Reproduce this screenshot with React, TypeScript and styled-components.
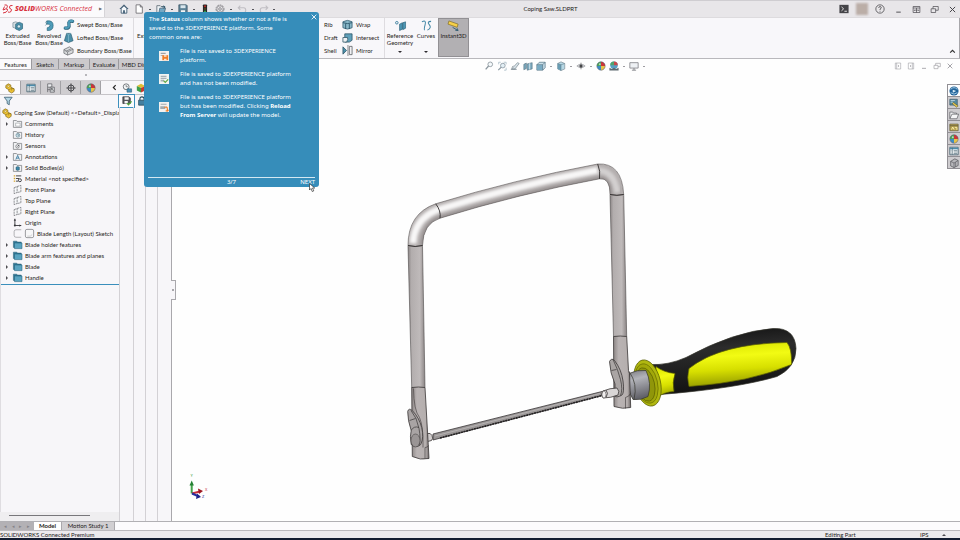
import React from "react";
import styled, { createGlobalStyle, css } from "styled-components";

const GlobalStyle = createGlobalStyle`
  * { box-sizing: border-box; }
  html, body, #root { height: 100%; margin: 0; }
  body {
    font-family: Lato, "Noto Sans", sans-serif;
    font-size: 6px;
    line-height: 8px;
    color: #1f1d21;
    background: #ffffff;
    overflow: hidden;
  }
  button, input { font: inherit; color: inherit; margin: 0; padding: 0; border: 0; background: none; }
  ul { margin: 0; padding: 0; list-style: none; }
  p, h1, h2 { margin: 0; font-size: inherit; font-weight: inherit; }
`;

/* ---------- icons ---------- */

const Svg = styled.svg<{ $size?: number }>`
  display: block;
  flex: none;
  width: ${(p) => p.$size ?? 10}px;
  height: ${(p) => p.$size ?? 10}px;
  overflow: visible;
`;

const glyphs: Record<string, React.ReactNode> = {
  home: <><path d="M1 6 6 1l5 5" fill="none" stroke="#35536b" strokeWidth="1.200" /><path d="M2.600 5.400V11h6.800V5.400L6 2.200z" fill="#f4f8fb" stroke="#35536b" /><path d="M5 7.500h2V11H5z" fill="#35536b" /></>,
  file: <path d="M2.500 1h5l2.500 2.600V11H2.500zM7.500 1v2.600H10" fill="#fff" stroke="#5c5b60" strokeWidth=".9" />,
  open: <><path d="M1 11V2h4l1 1h4v8z" fill="#eef3f6" stroke="#54606a" strokeWidth=".9" /><path d="M3.500 10.500 4.500 5h7l-1.500 5.500z" fill="#74a8c4" stroke="#3d586a" strokeWidth=".8" /><path d="M7 3.500h3M9 2l2 1.600L9 5" fill="none" stroke="#2e5871" /></>,
  save: <><path d="M1 1h9l1 1v9H1z" fill="#5c8297" stroke="#3b5565" strokeWidth=".9" /><path d="M3 1.500h6V5H3z" fill="#d9e6ed" /><path d="M3.500 7.500h5V11h-5z" fill="#f4f4f4" /></>,
  traffic: <><rect x="3.500" y=".5" width="5" height="11" rx="1" fill="#262626" /><circle cx="6" cy="2.800" r="1.300" fill="#b32b24" /><circle cx="6" cy="6" r="1.200" fill="#514a25" /><circle cx="6" cy="9.200" r="1.300" fill="#2fa04a" /></>,
  gear: <><circle cx="6" cy="6" r="4.800" fill="none" stroke="#8a898e" strokeWidth="1.200" strokeDasharray="2.200 .9" /><circle cx="6" cy="6" r="3.800" fill="none" stroke="#77767b" strokeWidth=".7" /><circle cx="6" cy="6" r="1.600" fill="none" stroke="#77767b" strokeWidth=".9" /></>,
  undo: <path d="M4 2 1.500 4.500 4 7M1.500 4.500H8q2.500 0 2.500 3T8 10.500" fill="none" stroke="#c0bec3" strokeWidth="1.300" />,
  redo: <path d="M8 2l2.500 2.500L8 7M10.500 4.500H4q-2.500 0-2.500 3T4 10.500" fill="none" stroke="#c0bec3" strokeWidth="1.300" />,
  console: <><rect x=".5" y="1" width="11" height="10" fill="#454448" /><path d="m3 3.500 2.500 2.300L3 8.200M6.500 8.700H9.500" fill="none" stroke="#fff" strokeWidth="1" /></>,
  help: <><circle cx="6" cy="6" r="5" fill="none" stroke="#3f3e42" strokeWidth=".9" /><path d="M4.400 4.700Q4.500 3.100 6 3.100T7.600 4.500Q7.600 5.300 6 6.200V7.200M6 8.200v1" fill="none" stroke="#3f3e42" strokeWidth=".9" /></>,
  min: <path d="M3 9.500h6" stroke="currentColor" strokeWidth="1.200" />,
  span: <><path d="M1.500 2h9v8h-9zM1.500 4h9M6 4v6" fill="none" stroke="currentColor" strokeWidth=".9" /><path d="M3 7h6M4 6 3 7l1 1M8 6l1 1-1 1" fill="none" stroke="currentColor" strokeWidth=".7" /></>,
  restore: <path d="M1.500 5h6v5h-6zM4 5V2h7v5H7.500" fill="none" stroke="currentColor" strokeWidth=".9" />,
  close: <path d="m2.500 2.500 7 7m0-7-7 7" stroke="currentColor" strokeWidth="1.300" />,
  paneLeft: <><path d="M2 1.500h8v9H2zM4 1.500v9" fill="none" stroke="currentColor" strokeWidth=".8" /><path d="M7.500 4.500 5.500 6l2 1.500z" fill="currentColor" /></>,
  paneRight: <><path d="M2 1.500h8v9H2zM8 1.500v9" fill="none" stroke="currentColor" strokeWidth=".8" /><path d="M4.500 4.500 6.500 6l-2 1.500z" fill="currentColor" /></>,
  extrude: <><path d="M1 3 4 2l3 1v5L4 9 1 8z" fill="#d3dde1" stroke="#6c8490" strokeWidth=".7" /><path d="M4 4.500 8 2.500 11.500 4v5.500L8 11.500 4 9.800z" fill="#4b93ad" stroke="#245a71" strokeWidth=".7" /><circle cx="7.500" cy="7" r="1.800" fill="#d8eaf0" stroke="#245a71" strokeWidth=".6" /></>,
  revolve: <><path d="M3 1q7-1 7 5T3.500 11.500V8.500Q6.500 8 6.500 6T3 4.500z" fill="#4e9cb9" stroke="#256177" strokeWidth=".7" /><path d="M3 1q-2 1.500 0 3.500L1.500 6" fill="#cae1e9" stroke="#256177" strokeWidth=".6" /></>,
  sweep: <><path d="M2.500 10q5 .500 4-4t4-3.500" fill="none" stroke="#275f77" strokeWidth="3.600" strokeLinecap="round" /><path d="M2.500 9.700q5 .500 4-4t4-3.500" fill="none" stroke="#4e9cb9" strokeWidth="2.400" strokeLinecap="round" /></>,
  loft: <><path d="M4 1.500h4.500l2.500 8L6 11.500 1.500 9.500z" fill="#4b8fa9" stroke="#235469" strokeWidth=".7" /><path d="M6 3v8M4 1.500 6 3l2.500-1.500" fill="none" stroke="#8fc0d2" strokeWidth=".7" /></>,
  boundary: <><path d="M1 5 7 2l4 2.500v4L5 11 1 9z" fill="#d8dadc" stroke="#65686c" strokeWidth=".8" /><path d="m3 7 6-3M5 11V7.500L1 5M5 7.500 11 4.500" fill="none" stroke="#65686c" strokeWidth=".7" /></>,
  wrap: <><path d="M1 3q5-3 10 0v6.500q-5 3-10 0z" fill="#89b8c9" stroke="#3c6377" strokeWidth=".9" /><path d="M1 4q5 2 10 0M4 5v6M8 5v6" fill="none" stroke="#234f64" strokeWidth=".9" /></>,
  intersect: <><path d="M3 2h8v7l-3 2H3z" fill="#5fa0ba" stroke="#264e60" strokeWidth=".8" /><path d="M1 6h5q1 2-1 5H1z" fill="#eef1f3" stroke="#264e60" strokeWidth=".8" /></>,
  mirror: <><path d="m1 2 4 4-4 4z" fill="#4c90aa" stroke="#264e60" strokeWidth=".8" /><path d="M6.500 0v12" stroke="#555" strokeWidth=".7" /><path d="M8 1.500h3v9H8z" fill="#f1f1f4" stroke="#50555a" strokeWidth=".8" /></>,
  rib: <path d="M3 2h5v9H3z" fill="#4c90aa" stroke="#264e60" strokeWidth=".8" />,
  reference: <><circle cx="2" cy="3" r="1.400" fill="none" stroke="#397d9b" /><path d="M5 4.500 8 3v7L5 11.500zM8.500 3l3-1v7l-3 1.500z" fill="#4d97b5" stroke="#275f77" strokeWidth=".7" /></>,
  curves: <path d="M1 2q5-2.500 3.500 3T4 11M11 1.500Q6 1.500 9 5t-2 6" fill="none" stroke="#3e84a3" strokeWidth="1.100" />,
  instant: <><path d="m1 1 10 3.500-1 3.500L0 4.500z" fill="#f6d048" stroke="#7b6720" strokeWidth=".7" /><path d="m5 8 6 3.500M11 11.500l-3-.2M11 11.500l-1-2.500" fill="none" stroke="#315d73" /></>,
  zoom: <><circle cx="7.500" cy="4" r="2.800" fill="#f5f9fb" stroke="#8b969e" /><path d="M5.500 6 2 10" stroke="#8b969e" strokeWidth="1.500" /></>,
  zoomArea: <><path d="M2 4V1.500h2.500M8 1.500h3V4M11 8v3H8.500" fill="none" stroke="#9cb0bc" strokeWidth=".8" /><circle cx="7" cy="5.500" r="2.800" fill="#e2eef4" stroke="#8d9aa3" /><path d="M5 7.500 1.500 11" stroke="#8d9aa3" strokeWidth="1.300" /></>,
  prev: <><path d="M2 9.500 9 2l2 1-5 6.500z" fill="#dbe6eb" stroke="#718089" strokeWidth=".8" /><path d="M1 10h7M4 6 2 8" stroke="#718089" /></>,
  section: <><path d="M1 4 4 2.500V9L1 10.500zM5 3.500 11 2v7.500L5 11z" fill="#7ba9be" stroke="#536e7d" strokeWidth=".7" /><path d="M8 2.700v7.600" stroke="#dcebf2" /></>,
  orient: <><path d="M1 4.500h7V11H1z" fill="#8db9ce" stroke="#4d6c7d" strokeWidth=".8" /><path d="m1 4.500 3-3h7V8l-3 3V4.500zM8 4.500l3-3" fill="#c9dfe9" stroke="#4d6c7d" strokeWidth=".8" /><path d="M1.500 5h6v5.500h-6z" fill="#79abc3" /></>,
  cube: <><path d="M2 3 6 1l4.500 2v6.500L6 11.500 2 9.500z" fill="#b7d8e5" stroke="#7b8b94" strokeWidth=".8" /><path d="M2 3 6 4.500v7L2 9.500z" fill="#679db4" /><path d="M6 4.500v7M2 3l4 1.500L10.500 3" fill="none" stroke="#62808e" strokeWidth=".7" /></>,
  eye: <><path d="M1 6q5-4.500 10 0-5 4-10 0z" fill="#d2d3d6" stroke="#8a8b90" strokeWidth=".7" /><circle cx="6" cy="6" r="1.900" fill="#3e4044" /><path d="M6 2v8" stroke="#555" strokeWidth=".7" /></>,
  ball: <><circle cx="6" cy="6" r="5" fill="#3d8cc4" /><path d="M6 6V1a5 5 0 0 1 5 5z" fill="#cc3439" /><path d="M6 6V1a5 5 0 0 0-5 5z" fill="#48a557" /><path d="M6 6h5a5 5 0 0 1-5 5z" fill="#e7c447" /><circle cx="6" cy="6" r="5" fill="none" stroke="#70636a" strokeWidth=".6" /><circle cx="4.600" cy="4" r="1.200" fill="#fff" opacity=".6" /></>,
  scene: <><circle cx="6" cy="5" r="4.500" fill="#58a0c5" /><path d="M6 5V.500a4.500 4.500 0 0 1 4.500 4.500z" fill="#c7484a" /><path d="M6 5V.500A4.500 4.500 0 0 0 1.500 5z" fill="#50a36d" /><path d="M.500 11.500V8l3 1.500L6 8l2.500 1.500 3-1.500v3.500z" fill="#5d696f" /></>,
  monitor: <><path d="M1 2h10v6.500H1z" fill="#eef1f4" stroke="#76777d" strokeWidth=".9" /><path d="M6 8.500V11M3.500 11h5" stroke="#76777d" /></>,
  part: <><path d="M1 6V3l3-2 3 1.500v2.500l4 2v3L8 12 4.500 10V8z" fill="#efc435" stroke="#7f6315" strokeWidth=".8" /><circle cx="4" cy="4" r="1.200" fill="#fff3bf" stroke="#7f6315" strokeWidth=".5" /><path d="M4.500 8 8 6.500 11 7M8 6.500V9" fill="none" stroke="#7f6315" strokeWidth=".6" /></>,
  list: <><path d="M1 1.500h10v9H1z" fill="#fff" stroke="#45616f" /><path d="M1 2h10v2H1z" fill="#4b8cac" /><path d="M4 2v8.500M5.500 5.500H10M5.500 7.200H10M5.500 9H10M2 5.500h1M2 7.200h1M2 9h1" stroke="#4d6977" strokeWidth=".8" /></>,
  config: <><path d="M2 1h5v4H2zM2 5v6M2 8h3" fill="#eceef0" stroke="#505156" strokeWidth=".8" /><path d="M5 5h5v6H5z" fill="#d6d9dc" stroke="#505156" strokeWidth=".8" /><path d="m6 9 1-3 1 2 1 1.500" fill="none" stroke="#333" strokeWidth=".7" /></>,
  target: <><circle cx="6" cy="6" r="3.600" fill="none" stroke="#333437" strokeWidth="1" /><path d="M6 .5v11M.5 6h11" stroke="#333437" strokeWidth="1" /></>,
  filter: <path d="M1.500 1.500h9.500L7.500 6v4.500L5 9V6z" fill="#b4d7e6" stroke="#3e6275" strokeWidth="1" />,
  statusHead: <><circle cx="5" cy="4.500" r="3.500" fill="#f4f6f8" stroke="#51545a" strokeWidth=".9" /><path d="M5 2.500v2h2" fill="none" stroke="#51545a" strokeWidth=".8" /><path d="M6 7h5.500v4H6z" fill="#4c93b7" stroke="#2c5c74" strokeWidth=".7" /></>,
  colorCube: <><path d="M1 3.500 6 1l5 2.500L6 6z" fill="#e1be32" /><path d="M1 3.500 6 6v5.500L1 9z" fill="#3f9d4a" /><path d="M11 3.500 6 6v5.500L11 9z" fill="#c63a2f" /></>,
  saveCheck: <><path d="M1 1h7.500L10 2.500V9H1z" fill="#54565c" stroke="#303136" strokeWidth=".8" /><path d="M3 1.500h5v3H3zM3 6h4v3H3z" fill="#f4f4f4" /><path d="m6 8.500 1.800 2 3.700-4" fill="none" stroke="#4ea33a" strokeWidth="1.500" /></>,
  lock: <><path d="M3.500 5V3.500a2.500 2.500 0 0 1 5 0V5" fill="none" stroke="#294c5c" strokeWidth="1.300" /><path d="M2 5h8v6H2z" fill="#4380a0" stroke="#294c5c" /></>,
  folderLine: <><path d="M.500 2h4l1 1.200h6v8H.500z" fill="#f1f2f4" stroke="#6e7176" strokeWidth=".9" /><path d="M3.500 5.500h6v4h-6z" fill="#fff" stroke="#878a8f" strokeWidth=".7" /></>,
  history: <><path d="M.500 2h4l1 1.200h6v8H.500z" fill="#f1f2f4" stroke="#6e7176" strokeWidth=".9" /><circle cx="6.500" cy="7" r="2.500" fill="#d7e9f0" stroke="#4c7587" strokeWidth=".8" /><path d="M6.500 5.500V7H8" fill="none" stroke="#35586a" strokeWidth=".7" /></>,
  sensors: <><path d="M.500 2h4l1 1.200h6v8H.500z" fill="#f1f2f4" stroke="#6e7176" strokeWidth=".9" /><circle cx="6" cy="7.200" r="2.300" fill="none" stroke="#55585d" strokeWidth=".8" /><path d="m6 7.500 2.500-2.500" stroke="#3a3b3f" /></>,
  annotations: <><path d="M.500 2h4l1 1.200h6v8H.500z" fill="#f1f2f4" stroke="#6e7176" strokeWidth=".9" /><path d="m3.800 10 2.400-5.500L8.600 10M4.800 8.200h2.800" fill="none" stroke="#31739b" strokeWidth="1.100" /></>,
  solids: <><path d="M.500 2h4l1 1.200h6v8H.500z" fill="#f1f2f4" stroke="#6e7176" strokeWidth=".9" /><path d="M4 5.500 6.300 4.500 8.500 5.500v3.500l-2.200 1L4 9z" fill="#3e87a7" stroke="#224e62" strokeWidth=".6" /></>,
  material: <><path d="M1 2.500h2M1 6h2M1 9.500h2" stroke="#d7a62c" strokeWidth="1.700" /><path d="M4 2.500h7M4 6h4M4 9.500h3" stroke="#37383c" strokeWidth="1.200" /><circle cx="9.200" cy="8.300" r="2" fill="none" stroke="#37383c" strokeWidth="1.200" /></>,
  plane: <path d="M1.500 3.500 5.500 2v8L1.500 11.500zM5.500 2 10.500 .500v8.500L5.500 10" fill="#f7f8fa" stroke="#636468" strokeWidth=".9" strokeDasharray="3 .8" />,
  origin: <><path d="M2.500 1v9H11" fill="none" stroke="#37383c" strokeWidth="1.200" /><path d="M1 3.500 2.500 1 4 3.500zM8.500 8.500 11 10l-2.500 1.500z" fill="#37383c" /><circle cx="2.500" cy="10" r="1.400" fill="#37383c" /></>,
  bracket: <path d="M11 1H4Q1.500 1 1.500 3.500v5Q1.500 11 4 11h7" fill="none" stroke="#8f8f94" strokeWidth=".9" />,
  sketch: <><rect x=".5" y=".5" width="11" height="11" rx="2" fill="#f7f7f8" stroke="#6f7074" strokeWidth=".9" /><path d="M3 9.500h4l2.500-2" fill="none" stroke="#b5b5b9" strokeWidth=".8" /></>,
  folder: <><path d="M.500 1.500h4.500l1 1.200h5V10H.500z" fill="#2f7795" stroke="#235a72" strokeWidth=".6" /><path d="M2 4H12V11.500H2z" fill="#5aa4c1" stroke="#25627c" strokeWidth=".7" /></>,
  globe: <><circle cx="6" cy="6" r="5.500" fill="#20639a" /><path d="M2 4q4-4 8 0M2 8q4 3.500 8 0" fill="none" stroke="#9cc6e0" strokeWidth="1.200" /><path d="m4.500 4.500 4 1.500-4 2z" fill="#d9ecf6" /></>,
  resources: <><path d="M1 1.500h9v7H1z" fill="#568aa1" stroke="#3c5c6a" strokeWidth=".8" /><path d="m5 5 6 4.500-2 1.500-5-4z" fill="#e5c54e" stroke="#5b5d31" strokeWidth=".7" /><path d="M2 3h5M2 5h3" stroke="#dceaf0" strokeWidth=".8" /></>,
  folderOpen: <path d="M1 10V2.500h3.500l1 1.200H9V5h2.500L9.500 10.500H1L3.500 5H9" fill="#f5f5f6" stroke="#616267" strokeWidth=".9" />,
  palette: <><path d="M1 2.500h10v8H1z" fill="#b9a351" stroke="#625a37" strokeWidth=".8" /><path d="M1 4.500h10" stroke="#625a37" /><path d="m3 9 1.500-3L6 9M7 6.500h2.500v3" fill="none" stroke="#fff4b3" /></>,
  forum: <><path d="M2 4 7 1l4 2v6l-5 2.500-4-2z" fill="#b8b8bc" stroke="#4d4e53" strokeWidth=".8" /><path d="M2 4l4 2 5-3M6 6v5.500M8 5v5.500" fill="none" stroke="#4d4e53" strokeWidth=".7" /></>,
  notSaved: <><path d="M0 0h12v12H0z" fill="#f3f1ef" /><path d="M2 2h6v1.500H2zM2 5h3v1H2z" fill="#9ea3a8" /><path d="M4 5h7v6H4z" fill="#ee7d27" /><path d="M6 5h3v1.800H6zM6 9.200h3V11H6z" fill="#fbe3cf" /></>,
  saved: <><path d="M0 0h12v12H0z" fill="#f1f4f2" /><path d="M2 2h7v1.500H2zM2 4.500h7V6H2zM2 7h4v2H2z" fill="#a9b1b6" /><path d="m5.500 8 2 2L11 6.500" fill="none" stroke="#61a743" strokeWidth="1.500" /></>,
  modified: <><path d="M0 0h12v12H0z" fill="#f3f1ef" /><path d="M2 2h7v1.200H2zM1.500 5h6v3.500h-6z" fill="#a3aaae" /><path d="M6.500 6.500Q10 5 10 8v2.500M8 10.500l2 .500 1.500-1.500" fill="none" stroke="#ee7d27" strokeWidth="1.400" /></>,
};

function Icon({ name, size }: { name: string; size?: number }) {
  return <Svg viewBox="0 0 12 12" $size={size} aria-hidden="true">{glyphs[name]}</Svg>;
}

/* ---------- frame ---------- */

const Page = styled.div`
  position: relative;
  height: 100%;
  display: flex;
  flex-direction: column;
`;

const TitleBar = styled.header`
  flex: none;
  height: 18px;
  display: flex;
  align-items: center;
  background: #e8e6e9;
  border-top: 1px solid #cfcdd1;
  border-bottom: 1px solid #dddbde;
`;

const Brand = styled.div`
  width: 105px;
  height: 100%;
  display: flex;
  align-items: center;
  gap: 2px;
  padding-left: 2px;
  background: #fbfafc;
  border-right: 1px solid #d6d4d8;
  color: #d8323f;
  font-family: "Open Sans", "Noto Sans", sans-serif;
  font-size: 7px;
  white-space: nowrap;
`;

const BrandMark = styled.svg`
  width: 11px;
  height: 10px;
`;

const BrandName = styled.span`
  flex: 1;
  font-style: italic;
  b { font-weight: 800; }
  i { margin-left: 2px; }
`;

const BrandArrow = styled.button`
  width: 8px;
  font-size: 4px;
  color: #67666b;
`;

const QuickTools = styled.nav`
  display: flex;
  align-items: center;
  padding-left: 13px;
`;

const ToolButton = styled.button<{ $w?: number }>`
  width: ${(p) => p.$w ?? 12}px;
  height: 12px;
  display: flex;
  align-items: center;
  justify-content: center;
`;

const DotButton = styled.button<{ $w?: number; $pale?: boolean }>`
  width: ${(p) => p.$w ?? 10}px;
  height: 12px;
  display: flex;
  align-items: center;
  justify-content: center;
  color: ${(p) => (p.$pale ? "#9d9ca1" : "#55545a")};
  &::after {
    content: "";
    width: 2px;
    height: 1px;
    background: currentColor;
  }
`;

const DocTitle = styled.h1`
  flex: 1;
  padding-right: 15px;
  text-align: center;
`;

const WindowTools = styled.div`
  display: flex;
  align-items: center;
  gap: 6px;
  padding-right: 2px;
  color: #434247;
`;

const Avatar = styled.span`
  width: 12px;
  height: 12px;
  background: #bbaea7;
  filter: blur(1px);
`;

/* ---------- ribbon ---------- */

const Ribbon = styled.section`
  flex: none;
  height: 41px;
  display: flex;
  background: #f8f7fa;
  border-bottom: 1px solid #b9b8bc;
  border-right: 1px solid #a7a6aa;
`;

const Group = styled.div<{ $w?: number; $line?: boolean }>`
  display: flex;
  ${(p) => p.$w && css`width: ${p.$w}px;`}
  border-right: 1px solid ${(p) => (p.$line ? "#dedce0" : "transparent")};
`;

const BigButton = styled.button<{ $w: number; $active?: boolean }>`
  width: ${(p) => p.$w}px;
  display: flex;
  flex-direction: column;
  align-items: center;
  gap: 1px;
  padding-top: 2px;
  line-height: 7px;
  white-space: nowrap;
  ${(p) => p.$active && css`
    background: #b2b0b3;
    border: 1px solid #929094;
    margin-bottom: 1px;
    padding-top: 1px;
  `}
`;

const Caret = styled.span`
  margin-top: auto;
  margin-bottom: 5px;
  width: 4px;
  border: 2px solid transparent;
  border-top-color: #2c2a2e;
  border-bottom: 0;
`;

const SmallList = styled.div<{ $w: number }>`
  width: ${(p) => p.$w}px;
  display: flex;
  flex-direction: column;
`;

const SmallButton = styled.button`
  height: 13px;
  display: flex;
  align-items: center;
  gap: 3px;
  white-space: nowrap;
`;

const Collapse = styled.button`
  margin-left: auto;
  align-self: flex-end;
  width: 14px;
  height: 13px;
  display: grid;
  place-items: center;
`;

/* ---------- left column ---------- */

const Body = styled.div`
  flex: 1;
  min-height: 0;
  display: flex;
`;

const LeftColumn = styled.aside`
  flex: none;
  width: 172px;
  display: flex;
  flex-direction: column;
  background: #f7f6f9;
  border-right: 1px solid #a9a8ac;
  overflow: hidden;
`;

const CommandTabs = styled.div`
  height: 11px;
  flex: none;
  display: flex;
  background: #f8f7fa;
  border-bottom: 1px solid #b5b4b8;
`;

const CommandTab = styled.button<{ $w: number; $on?: boolean }>`
  width: ${(p) => p.$w}px;
  flex: none;
  white-space: nowrap;
  line-height: 9px;
  background: ${(p) => (p.$on ? "#fbfafc" : "#cbc9cc")};
  border-right: 1px solid #9b9a9e;
`;

const GripRow = styled.div`
  flex: none;
  height: 11px;
  display: grid;
  place-items: center;
  border-bottom: 1px solid #d0ced2;
  &::after {
    content: "";
    width: 2px;
    height: 2px;
    background: #a2a1a6;
    border-radius: 50%;
  }
`;

const PanelTabs = styled.div`
  flex: none;
  height: 14px;
  display: flex;
  border-bottom: 1px solid #c6c4c8;
`;

const PanelTab = styled.button<{ $on?: boolean }>`
  width: ${(p) => (p.$on ? 21 : 20)}px;
  display: grid;
  place-items: center;
  background: ${(p) => (p.$on ? "#fbfafc" : "#cfcdd0")};
  border-right: 1px solid #a3a2a6;
`;

const PanelTail = styled.div`
  flex: 1;
  display: flex;
  align-items: center;
  padding-left: 10px;
  gap: 4px;
`;

const FilterRow = styled.div`
  flex: none;
  height: 12px;
  display: flex;
  align-items: center;
  padding-left: 3px;
`;

const FilterInput = styled.input`
  flex: 1;
  min-width: 0;
  height: 10px;
  margin-left: 3px;
  outline: 0;
`;

const StatusColumn = styled.button`
  width: 17px;
  height: 14px;
  display: grid;
  place-items: center;
  background: #fbfbfd;
  border: 1px solid #3c8fbd;
  margin-right: 2px;
`;

const HeaderIcon = styled.span`
  width: 34px;
`;

const Panes = styled.div`
  flex: 1;
  min-height: 0;
  display: grid;
  grid-template-columns: 119px 14px 12px 12px 1fr;
`;

const Column = styled.div`
  border-left: 1px solid #d3d1d5;
`;

const TreePane = styled.div`
  min-width: 0;
  display: flex;
  flex-direction: column;
  overflow: hidden;
`;

const Tree = styled.ul`
  flex: 1;
  border-left: 1px solid #dfdde1;
`;

const TreeRow = styled.li<{ $root?: boolean; $last?: boolean }>`
  height: 11px;
  display: flex;
  align-items: center;
  gap: 3px;
  padding-left: ${(p) => (p.$root ? 1 : 2)}px;
  ${(p) => p.$root && css`gap: 2px;`}
  white-space: nowrap;
  ${(p) => p.$last && css`
    height: 13px;
    padding-bottom: 1px;
    border-bottom: 1px solid #3a8fbc;
  `}
`;

const Twisty = styled.button<{ $shown?: boolean }>`
  width: 7px;
  height: 9px;
  display: flex;
  align-items: center;
  justify-content: center;
  visibility: ${(p) => (p.$shown ? "visible" : "hidden")};
  &::after {
    content: "";
    border: 2px solid transparent;
    border-left-color: #4c4b50;
    border-right: 0;
  }
`;

const TreeScroll = styled.div`
  flex: none;
  height: 9px;
  padding: 3px 29px 0 9px;
  background: #efeef0;
  &::after {
    content: "";
    display: block;
    height: 1px;
    background: #78777b;
  }
`;

/* ---------- graphics area ---------- */

const Viewport = styled.main`
  position: relative;
  flex: 1;
  min-width: 0;
  background: #fefefe;
`;

const Drawing = styled.svg`
  display: block;
  width: 100%;
  height: 100%;
`;

const ViewHeader = styled.div`
  position: absolute;
  inset: 1px 0 auto 0;
  height: 12px;
  display: grid;
  grid-template-columns: 1fr auto 1fr;
  align-items: center;
  color: #98979c;
`;

const ViewTools = styled.div`
  grid-column: 2;
  display: flex;
  padding-right: 3px;
`;

const DocTools = styled.div`
  display: flex;
  justify-content: flex-end;
  padding-right: 4px;
`;

const TaskPane = styled.nav`
  position: absolute;
  top: 25px;
  right: 0;
  width: 13px;
  border: 1px solid #918f94;
  border-width: 1px 0 0 1px;
`;

const TaskButton = styled.button<{ $on?: boolean }>`
  width: 100%;
  height: 12px;
  display: grid;
  place-items: center;
  background: ${(p) => (p.$on ? "#fdfdfe" : "#cecccf")};
  border-bottom: 1px solid #918f94;
`;

const Splitter = styled.button`
  position: absolute;
  left: -1px;
  top: 221px;
  width: 5px;
  height: 20px;
  display: grid;
  place-items: center;
  background: #f7f6f9;
  border: 1px solid #a9a8ac;
  border-left: 0;
  &::after {
    content: "";
    width: 2px;
    height: 2px;
    border-radius: 50%;
    background: #8e8d91;
  }
`;

/* ---------- bottom ---------- */

const SheetTabs = styled.div`
  flex: none;
  height: 9px;
  display: flex;
  background: #fcfbfd;
  border-top: 1px solid #b1b0b4;
`;

const SheetNav = styled.div`
  width: 34px;
  display: flex;
  justify-content: space-evenly;
  background: #b3b1b5;
  color: #858388;
  button { line-height: 7px; font-size: 5px; }
`;

const SheetTab = styled.button<{ $w: number; $on?: boolean }>`
  width: ${(p) => p.$w}px;
  line-height: 8px;
  font-weight: ${(p) => (p.$on ? 700 : 400)};
  background: ${(p) => (p.$on ? "#ffffff" : "#d1cfd2")};
  border-right: 1px solid #aaa8ac;
  white-space: nowrap;
`;

const StatusBar = styled.footer`
  flex: none;
  height: 10px;
  display: flex;
  align-items: center;
  line-height: 7px;
  background: #eceaed;
  border-top: 1px solid #bbb9bd;
  border-bottom: 2px solid #131c30;
`;

const StatusText = styled.span<{ $w?: number }>`
  ${(p) => (p.$w ? css`width: ${p.$w}px;` : css`flex: 1;`)}
`;

const UnitCaret = styled.button`
  width: 18px;
  display: flex;
  &::after {
    content: "";
    border: 2px solid transparent;
    border-bottom-color: #4c4b50;
    border-top: 0;
  }
`;

/* ---------- guide popup ---------- */

const Guide = styled.section`
  position: absolute;
  left: 144px;
  top: 12px;
  width: 175px;
  height: 175px;
  display: flex;
  flex-direction: column;
  padding: 3px 4px 0 5px;
  border-radius: 3px;
  background: #368dba;
  color: #ffffff;
  font-family: "Noto Sans", "Open Sans", sans-serif;
  line-height: 9px;
`;

const GuideText = styled.p`
  white-space: nowrap;
  b { font-weight: 700; }
`;

const GuideClose = styled.button`
  position: absolute;
  top: 1px;
  right: 1px;
  width: 8px;
  height: 8px;
`;

const GuideItem = styled.div`
  display: grid;
  grid-template-columns: 10px 1fr;
  gap: 11px;
  align-items: center;
  padding-left: 10px;
  margin-top: 5px;
`;

const GuideFoot = styled.div`
  margin-top: auto;
  height: 10px;
  display: grid;
  grid-template-columns: 1fr auto 1fr;
  border-top: 1px solid #d3e8f2;
  margin-left: -1px;
`;

const NextButton = styled.button`
  justify-self: end;
`;

const Cursor = styled.svg`
  position: absolute;
  left: 309px;
  top: 183px;
  width: 6px;
  height: 9px;
`;

/* ---------- data ---------- */

const tree = [
  ["Comments", "folderLine", true],
  ["History", "history", false],
  ["Sensors", "sensors", false],
  ["Annotations", "annotations", true],
  ["Solid Bodies(6)", "solids", true],
  ["Material <not specified>", "material", false],
  ["Front Plane", "plane", false],
  ["Top Plane", "plane", false],
  ["Right Plane", "plane", false],
  ["Origin", "origin", false],
  ["Blade Length (Layout) Sketch", "sketch", false],
  ["Blade holder features", "folder", true],
  ["Blade arm features and planes", "folder", true],
  ["Blade", "folder", true],
  ["Handle", "folder", true],
] as const;

const viewTools = ["zoom", "zoomArea", "prev", "section", "orient", "", "cube", "", "eye", "", "ball", "scene", "", "monitor", ""];
const quickTools: [string, number][] = [
  ["home", 12], ["file", 18], ["", 4], ["open", 18], ["", 4], ["save", 18], ["", 4],
  ["traffic", 18], ["gear", 12], ["", 10], ["undo", 12], ["", 9], ["redo", 13], ["", 8],
];

function SawDrawing() {
  return (
    <Drawing viewBox="172 59 788 461" role="img" aria-label="Coping saw model">
      <defs>
        <linearGradient id="leg"><stop stopColor="#8b8585" /><stop offset=".2" stopColor="#b2adad" /><stop offset=".7" stopColor="#bfbaba" /><stop offset="1" stopColor="#8b8585" /></linearGradient>
        <linearGradient id="plate"><stop stopColor="#8d8786" /><stop offset=".3" stopColor="#b9b3b3" /><stop offset=".8" stopColor="#b5afae" /><stop offset="1" stopColor="#716b6b" /></linearGradient>
        <linearGradient id="collar" x1="0" y1="0" x2=".2" y2="1"><stop stopColor="#7a7a80" /><stop offset=".35" stopColor="#b2b3b9" /><stop offset="1" stopColor="#626269" /></linearGradient>
        <linearGradient id="yellow" x1=".4" y1="0" x2=".55" y2="1"><stop stopColor="#dbe500" /><stop offset=".3" stopColor="#f2fb13" /><stop offset=".6" stopColor="#d7df00" /><stop offset="1" stopColor="#8d9400" /></linearGradient>
        <linearGradient id="black" x1=".4" y1="0" x2=".55" y2="1"><stop stopColor="#141414" /><stop offset=".3" stopColor="#2c2c2c" /><stop offset="1" stopColor="#0f0f0f" /></linearGradient>
        <filter id="soft" x="-10%" y="-20%" width="120%" height="140%"><feGaussianBlur stdDeviation="1.600" /></filter>
        <clipPath id="tube">
          <path d="M408 246Q408 213 435.700 203.300 515 179 597.700 163.500 622 162 623.700 195H610q.2-18-10.500-16.700Q520 193 440 217.700 423 223 422.500 246z" />
        </clipPath>
      </defs>

      <g stroke="#4a4646" strokeWidth=".6" strokeLinejoin="round">
        <path d="M610 194h13.700L626.700 336h-13.200z" fill="url(#leg)" />
        <path d="M408 245h14.500L425 387h-13.300z" fill="url(#leg)" />
      </g>
      <g clipPath="url(#tube)">
        <path d="M400 155h230v95H400z" fill="#b3aeae" />
        <path d="M413 243Q414 219 437 209.500 517 184.500 598 169.500" fill="none" stroke="#f8f7f7" strokeWidth="7" filter="url(#soft)" />
        <path d="M598 170Q614 170 617.500 192" fill="none" stroke="#d3d0d0" strokeWidth="6" filter="url(#soft)" />
        <path d="M422.500 246Q423 223 440 217.700 520 193 599.500 178.300 610 178 610 195" fill="none" stroke="#8a8484" strokeWidth="3" filter="url(#soft)" />
      </g>
      <path d="M408 245Q408 213 435.700 203.300 515 179 597.700 163.500 622 162 623.700 194q-7 2-13.700 0 .2-17-10.500-15.700Q520 193 440 217.700 423 223 422.500 245q-7 2-14.500 0z" fill="none" stroke="#5a5656" strokeWidth=".6" />
      <path d="M435.700 203.300q5.500 7 4.300 14.400M597.700 163.500q3 7 1.800 14.800M408 245q7 2 14.500 0M610 194q7 1.500 13.700 0" fill="none" stroke="#302d2d" strokeWidth=".9" />

      <path d="M433 433.500 604 390.500v4L433 439.500z" fill="#9a9696" stroke="#373435" strokeWidth=".8" />
      <path d="M440 437.500 604 394.500" stroke="#242223" strokeWidth="1.600" strokeDasharray="2 .7" />
      <path d="M435 435.500 600 393" stroke="#c2bfbf" strokeWidth=".7" />

      <g stroke="#3a3636" strokeWidth=".8" strokeLinejoin="round">
        <path d="M427.500 433q3-1 4.500 2t-.5 5l-4 1z" fill="#d2cece" />
        <path d="M411.700 387q7-1 13.300 0l2.700 47L429 458q-9 2-16.700-2z" fill="url(#plate)" />
        <path d="M413.500 388q.3 22 6 29 4 9 3.500 30M425 458V447q3 0 3.500-2" fill="none" strokeWidth=".6" />
        <path d="M407.700 411q1-4 4.500-1 7 7 9.500 17t-1 17q-4 4-9.500 0-1.500-9 0-14-3.500-10-3.500-19z" fill="#a9a4a4" />
        <path d="M411 410q6 7 8 18t0 17M409.500 420l6-2M411 430q3-5 8-3" fill="none" strokeWidth=".7" />
        <ellipse cx="415.500" cy="440" rx="4.500" ry="6.500" fill="#9a9595" strokeWidth=".5" />
      </g>

      <g stroke="#33342b" strokeWidth=".7" strokeLinejoin="round">
        <path d="M650 364Q668 365 686 357 734 331 773 328 795 327 796 348 796 367 777 376 736 388 660 394z" fill="url(#black)" />
        <path d="M689 368Q720 343 787 342q5 6 4.500 22Q750 382 689 386q-2.500-9 0-18z" fill="url(#yellow)" stroke="#5b6000" />
        <path d="M656 366q8 6 19 7-3 9-1 18-9 0-19 7z" fill="url(#yellow)" stroke="#5b6000" />
        <ellipse cx="647.500" cy="382.500" rx="13" ry="23.500" transform="rotate(-13 647.500 382.500)" fill="#b0b710" stroke="#575c00" />
        <ellipse cx="646.500" cy="383" rx="11" ry="20" transform="rotate(-13 646.500 383)" fill="#a2a80a" stroke="#6b7000" />
        <ellipse cx="645.500" cy="384" rx="9" ry="17" transform="rotate(-13 645.500 384)" fill="#90960a" stroke="#5d6200" />
        <path d="M629 373q8-4 17-3 6 13 2 26-7 4-15 3-6-9-4-26z" fill="url(#collar)" />
        <path d="M629 371q9 12 5 28" fill="none" />
      </g>

      <g stroke="#3a3636" strokeWidth=".8" strokeLinejoin="round">
        <path d="M613.500 336q7-1 13.200 0l1.800 34 1 3 1.200 34q-8 2-16.700-1z" fill="url(#plate)" />
        <path d="M625.500 408V397q4-1 5-4" fill="none" strokeWidth=".6" />
        <path d="M609.500 361q2-4 5-1 7 9 8.500 20.500t-1 14q-5 3-7 1v-12q-5-11-5.500-22.500z" fill="#aaa5a4" />
        <path d="M613 359q5 10 7.500 20t0 16M611.500 370l5-1" fill="none" strokeWidth=".7" />
        <path d="M603 390.500q7-3 14-3 3 3 1 7-7 3-15 3-3-3 0-7z" fill="#d9d6d6" />
        <path d="M606 389.500q3 3 0 7.500" fill="none" />
        <ellipse cx="604" cy="394" rx="2" ry="3.500" fill="#f0eeee" strokeWidth=".5" />
      </g>

      <g>
        <path d="M191.700 493V484" stroke="#43a34b" strokeWidth="2" />
        <path d="m189.500 485 2.200-5 2.200 5z" fill="#238133" />
        <path d="M192 493l8-2" stroke="#c52e3a" strokeWidth="2" />
        <path d="m198 488 5 2.500-4 3z" fill="#9e1823" />
        <path d="M192 493l7 3" stroke="#2630a0" strokeWidth="2" />
        <path d="m197 493 4 3.500-5 2z" fill="#1c2489" />
      </g>
      <g fontSize="4" fontFamily="Noto Sans, sans-serif">
        <text x="190.500" y="476" fill="#43a34b">Y</text>
        <text x="205" y="490" fill="#c52e3a">X</text>
        <text x="202" y="497" fill="#2630a0">Z</text>
      </g>
    </Drawing>
  );
}

export default function App() {
  return (
    <Page>
      <GlobalStyle />
      <TitleBar>
        <Brand>
          <BrandMark viewBox="0 0 22 20" aria-hidden="true">
            <path d="M5 2q8-1 5 5-2 4-8 5l3-7M2 18q8-1 9-5t-3-3M21 3q-6-1-6 3t3 4-1 6q-2 1-5 0" fill="none" stroke="#d8323f" strokeWidth="2" />
          </BrandMark>
          <BrandName><b>SOLID</b>WORKS<i>Connected</i></BrandName>
          <BrandArrow aria-label="Show menu">▶</BrandArrow>
        </Brand>
        <QuickTools aria-label="Quick access">
          {quickTools.map(([n, w], i) =>
            n ? <ToolButton key={i} $w={w} aria-label={n}><Icon name={n} /></ToolButton>
              : <DotButton key={i} $w={w} aria-label="More" />)}
        </QuickTools>
        <DocTitle>Coping Saw.SLDPRT</DocTitle>
        <WindowTools>
          <ToolButton aria-label="Console"><Icon name="console" /></ToolButton>
          <Avatar />
          <ToolButton aria-label="Help"><Icon name="help" /></ToolButton>
          {["min", "span", "restore", "close"].map((n) => (
            <ToolButton key={n} aria-label={n}><Icon name={n} size={9} /></ToolButton>
          ))}
        </WindowTools>
      </TitleBar>

      <Ribbon>
        <Group $w={134} $line>
          <BigButton $w={35}><Icon name="extrude" size={11} /><span>Extruded<br />Boss/Base</span></BigButton>
          <BigButton $w={28}><Icon name="revolve" size={11} /><span>Revolved<br />Boss/Base</span></BigButton>
          <SmallList $w={70}>
            <SmallButton><Icon name="sweep" size={11} />Swept Boss/Base</SmallButton>
            <SmallButton><Icon name="loft" size={11} />Lofted Boss/Base</SmallButton>
            <SmallButton><Icon name="boundary" size={11} />Boundary Boss/Base</SmallButton>
          </SmallList>
        </Group>
        <Group $w={176}>
          <BigButton $w={30}><Icon name="extrude" size={11} /><span>Extruded<br />Cut</span></BigButton>
        </Group>
        <Group $w={75} $line>
          <SmallList $w={32}>
            {["Rib", "Draft", "Shell"].map((t) => <SmallButton key={t}><Icon name="rib" size={11} />{t}</SmallButton>)}
          </SmallList>
          <SmallList $w={42}>
            {["Wrap", "Intersect", "Mirror"].map((t) => <SmallButton key={t}><Icon name={t.toLowerCase()} size={11} />{t}</SmallButton>)}
          </SmallList>
        </Group>
        <Group>
          <BigButton $w={30}><Icon name="reference" size={11} /><span>Reference<br />Geometry</span><Caret /></BigButton>
          <BigButton $w={22}><Icon name="curves" size={11} /><span>Curves</span><Caret /></BigButton>
        </Group>
        <BigButton $w={31} $active><Icon name="instant" size={11} /><span>Instant3D</span></BigButton>
        <Collapse aria-label="Collapse ribbon">
          <Svg viewBox="0 0 12 12" $size={7}><path d="M2 8 6 4l4 4" fill="none" stroke="#333" strokeWidth="2" /></Svg>
        </Collapse>
      </Ribbon>

      <Body>
        <LeftColumn>
          <CommandTabs>
            <CommandTab $w={32} $on>Features</CommandTab>
            <CommandTab $w={27}>Sketch</CommandTab>
            <CommandTab $w={31}>Markup</CommandTab>
            <CommandTab $w={29}>Evaluate</CommandTab>
            <CommandTab $w={53}>MBD Dimensions</CommandTab>
          </CommandTabs>
          <GripRow />
          <PanelTabs>
            <PanelTab $on aria-label="Feature tree"><Icon name="part" /></PanelTab>
            <PanelTab aria-label="Properties"><Icon name="list" /></PanelTab>
            <PanelTab aria-label="Configurations"><Icon name="config" /></PanelTab>
            <PanelTab aria-label="Dimensions"><Icon name="target" /></PanelTab>
            <PanelTab aria-label="Display"><Icon name="ball" /></PanelTab>
            <PanelTail>
              <Svg viewBox="0 0 12 12" $size={7}><path d="M8 2 4 6l4 4" fill="none" stroke="#222" strokeWidth="2" /></Svg>
              <Icon name="statusHead" />
              <Icon name="colorCube" />
            </PanelTail>
          </PanelTabs>
          <FilterRow>
            <Icon name="filter" />
            <FilterInput aria-label="Filter tree" />
            <StatusColumn aria-label="Status column"><Icon name="saveCheck" /></StatusColumn>
            <HeaderIcon><Icon name="lock" /></HeaderIcon>
          </FilterRow>
          <Panes>
            <TreePane>
              <Tree>
                <TreeRow $root><Icon name="part" />Coping Saw (Default) &lt;&lt;Default&gt;_Displa</TreeRow>
                {tree.map(([label, icon, open], i) => (
                  <TreeRow key={label} $last={i === tree.length - 1}>
                    <Twisty $shown={open} aria-label={"Expand " + label} />
                    {icon === "sketch" && <Icon name="bracket" size={9} />}
                    <Icon name={icon} size={9} />
                    {label}
                  </TreeRow>
                ))}
              </Tree>
              <TreeScroll />
            </TreePane>
            <Column /><Column /><Column /><Column />
          </Panes>
        </LeftColumn>

        <Viewport>
          <SawDrawing />
          <ViewHeader>
            <ViewTools>
              {viewTools.map((n, i) =>
                n ? <ToolButton key={i} $w={13} aria-label={n}><Icon name={n} /></ToolButton>
                  : <DotButton key={i} $w={7} $pale aria-label="More" />)}
            </ViewTools>
            <DocTools>
              {["paneLeft", "paneRight", "min", "restore", "close"].map((n) => (
                <ToolButton key={n} $w={13} aria-label={n}><Icon name={n} size={8} /></ToolButton>
              ))}
            </DocTools>
          </ViewHeader>
          <TaskPane>
            {["globe", "resources", "folderOpen", "palette", "ball", "list", "forum"].map((n, i) => (
              <TaskButton key={n} $on={i === 0} aria-label={n}><Icon name={n} /></TaskButton>
            ))}
          </TaskPane>
          <Splitter aria-label="Resize panel" />
        </Viewport>
      </Body>

      <SheetTabs>
        <SheetNav>
          {["◂", "◂", "▸", "▸"].map((c, i) => <button key={i} aria-label={"Sheet move " + i}>{c}</button>)}
        </SheetNav>
        <SheetTab $w={28} $on>Model</SheetTab>
        <SheetTab $w={53}>Motion Study 1</SheetTab>
      </SheetTabs>
      <StatusBar>
        <StatusText>SOLIDWORKS Connected Premium</StatusText>
        <StatusText $w={95}>Editing Part</StatusText>
        <StatusText $w={22}>IPS</StatusText>
        <UnitCaret aria-label="Change units" />
      </StatusBar>

      <Guide role="dialog" aria-label="Status column help">
        <GuideText>
          The <b>Status</b> column shows whether or not a file is<br />
          saved to the 3DEXPERIENCE platform. Some<br />common ones are:
        </GuideText>
        <GuideClose aria-label="Close"><Icon name="close" size={8} /></GuideClose>
        <GuideItem><Icon name="notSaved" /><GuideText>File is not saved to 3DEXPERIENCE<br />platform.</GuideText></GuideItem>
        <GuideItem><Icon name="saved" /><GuideText>File is saved to 3DEXPERIENCE platform<br />and has not been modified.</GuideText></GuideItem>
        <GuideItem><Icon name="modified" /><GuideText>File is saved to 3DEXPERIENCE platform<br />but has been modified. Clicking <b>Reload<br />From Server</b> will update the model.</GuideText></GuideItem>
        <GuideFoot>
          <span />
          <span>3/7</span>
          <NextButton>NEXT</NextButton>
        </GuideFoot>
      </Guide>
      <Cursor viewBox="0 0 12 18" aria-hidden="true">
        <path d="M1 1v13l3-3 2.500 6 3-1.300L7 10h4.500z" fill="#fff" stroke="#222" strokeWidth="1.300" />
      </Cursor>
    </Page>
  );
}
